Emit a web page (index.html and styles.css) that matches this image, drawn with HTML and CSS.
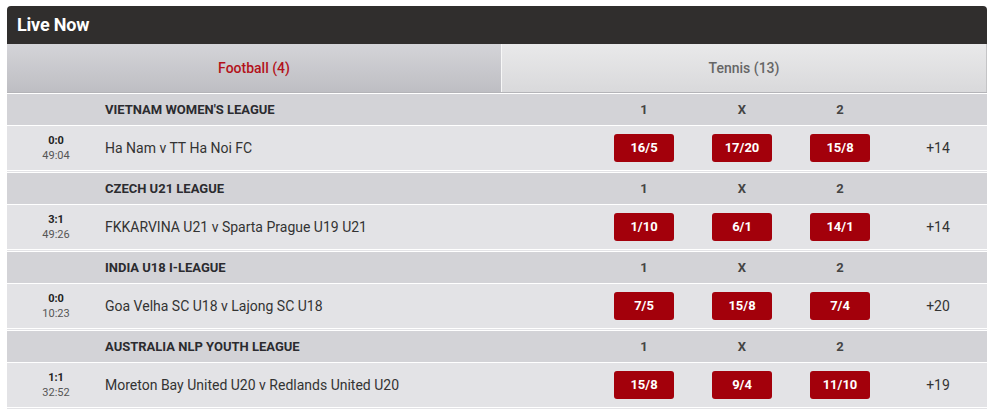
FILE: index.html
```html
<!DOCTYPE html>
<html lang="en">
<head>
<meta charset="utf-8">
<title>Live Now</title>
<link rel="stylesheet" href="styles.css">
</head>
<body>
<div class="panel">
  <div class="panel-head">Live Now</div>
  <div class="tabs">
    <div class="tab tab-active">Football (4)</div>
    <div class="tab tab-idle">Tennis (13)</div>
  </div>
  <div class="list">
    <div class="league">
      <div class="league-name">VIETNAM WOMEN'S LEAGUE</div>
      <div class="col">1</div><div class="col">X</div><div class="col">2</div><div class="col"></div>
    </div>
    <div class="match">
      <div class="clock"><b>0:0</b><span>49:04</span></div>
      <div class="teams">Ha Nam v TT Ha Noi FC</div>
      <div class="col"><span class="odd">16/5</span></div>
      <div class="col"><span class="odd">17/20</span></div>
      <div class="col"><span class="odd">15/8</span></div>
      <div class="col more">+14</div>
    </div>
    <div class="league">
      <div class="league-name">CZECH U21 LEAGUE</div>
      <div class="col">1</div><div class="col">X</div><div class="col">2</div><div class="col"></div>
    </div>
    <div class="match">
      <div class="clock"><b>3:1</b><span>49:26</span></div>
      <div class="teams">FKKARVINA U21 v Sparta Prague U19 U21</div>
      <div class="col"><span class="odd">1/10</span></div>
      <div class="col"><span class="odd">6/1</span></div>
      <div class="col"><span class="odd">14/1</span></div>
      <div class="col more">+14</div>
    </div>
    <div class="league">
      <div class="league-name">INDIA U18 I-LEAGUE</div>
      <div class="col">1</div><div class="col">X</div><div class="col">2</div><div class="col"></div>
    </div>
    <div class="match">
      <div class="clock"><b>0:0</b><span>10:23</span></div>
      <div class="teams">Goa Velha SC U18 v Lajong SC U18</div>
      <div class="col"><span class="odd">7/5</span></div>
      <div class="col"><span class="odd">15/8</span></div>
      <div class="col"><span class="odd">7/4</span></div>
      <div class="col more">+20</div>
    </div>
    <div class="league">
      <div class="league-name">AUSTRALIA NLP YOUTH LEAGUE</div>
      <div class="col">1</div><div class="col">X</div><div class="col">2</div><div class="col"></div>
    </div>
    <div class="match">
      <div class="clock"><b>1:1</b><span>32:52</span></div>
      <div class="teams">Moreton Bay United U20 v Redlands United U20</div>
      <div class="col"><span class="odd">15/8</span></div>
      <div class="col"><span class="odd">9/4</span></div>
      <div class="col"><span class="odd">11/10</span></div>
      <div class="col more">+19</div>
    </div>
  </div>
</div>
</body>
</html>
```

FILE: styles.css
```css
html, body {
  margin: 0;
  padding: 0;
  background: #ffffff;
}
body {
  font-family: Roboto, "Liberation Sans", Arial, sans-serif;
  color: #333;
}
.panel {
  width: 980px;
  margin: 6px 0 0 7px;
}
.panel-head {
  height: 38px;
  box-sizing: border-box;
  background: #302e2d;
  border-radius: 4px 4px 0 0;
  color: #fff;
  font-weight: 700;
  font-size: 18px;
  line-height: 37px;
  padding-left: 10px;
  letter-spacing: -0.2px;
}
.tabs {
  display: flex;
  height: 48px;
  border-bottom: 1px solid #b4b4b8;
}
.tab {
  display: flex;
  align-items: center;
  justify-content: center;
  font-size: 14px;
  font-weight: 500;
}
.tab-active {
  width: 494px;
  background: linear-gradient(#d4d4d8, #bebec3);
  color: #b3121a;
}
.tab-idle {
  flex: 1;
  background: linear-gradient(#e9e9ea, #d9d9db);
  color: #666;
  border-left: 1px solid #f7f7f7;
  border-right: 1px solid #c4c4c6;
}
.list {
  border-top: 1px solid #fff;
}
.league, .match {
  display: grid;
  grid-template-columns: 98px 1fr 98px 98px 98px 98px;
  align-items: center;
}
.league {
  height: 31px;
  background: #d3d3d7;
  font-size: 13px;
  font-weight: 700;
  color: #2b2b2f;
}
.league-name {
  grid-column: 2;
}
.league .col {
  color: #444;
}
.col {
  text-align: center;
}
.match {
  height: 44px;
  background: #e3e3e6;
  border-top: 1px solid #fff;
  border-bottom: 3px double #fff;
}
.clock {
  display: flex;
  flex-direction: column;
  align-items: center;
  font-size: 11px;
  line-height: 15px;
}
.clock b {
  color: #222;
}
.clock span {
  color: #555;
}
.teams {
  font-size: 14px;
  color: #333;
}
.odd {
  display: inline-block;
  width: 60px;
  height: 28px;
  line-height: 28px;
  background: #a3000b;
  border-radius: 3px;
  color: #fff;
  font-weight: 700;
  font-size: 13px;
  vertical-align: middle;
}
.more {
  font-size: 14px;
  color: #333;
}
```
